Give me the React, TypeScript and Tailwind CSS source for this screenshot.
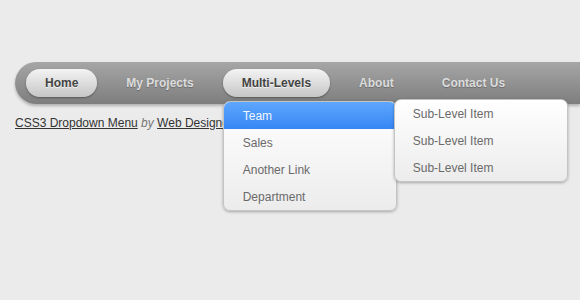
import React from "react";

const items = ["Home", "My Projects", "Multi-Levels", "About", "Contact Us"];
const subItems = ["Team", "Sales", "Another Link", "Department"];

export default function App() {
  return (
    <div className="min-h-[300px] w-full overflow-hidden bg-[#ebebeb] pt-[62px] font-['Liberation_Sans',Arial,sans-serif]">
      {/* Nav bar */}
      <nav className="ml-[15px] flex h-[42px] items-center gap-[10px] rounded-l-[21px] bg-gradient-to-b from-[#a6a6a6] to-[#7e7e7e] pl-[11px] shadow-[0_2px_3px_rgba(0,0,0,0.25)]">
        {items.map((label) => {
          const active = label === "Home" || label === "Multi-Levels";
          return (
            <div key={label} className="relative">
              <a
                className={
                  active
                    ? "flex h-[28px] items-center rounded-[14px] bg-gradient-to-b from-[#f4f4f4] to-[#c6c6c6] px-[19px] text-[12px] font-bold text-[#444] shadow-[0_1px_2px_rgba(0,0,0,0.35)] [text-shadow:0_1px_0_rgba(255,255,255,0.7)]"
                    : "flex h-[28px] items-center px-[19px] text-[12px] font-bold text-[#dcdcdc] [text-shadow:0_1px_1px_rgba(0,0,0,0.25)]"
                }
              >
                {label}
              </a>
              {label === "Multi-Levels" && (
                <div className="absolute left-0 top-[32px] z-10 w-[174px] rounded-[7px] border border-[#c4c4c4] bg-gradient-to-b from-white to-[#ececec] shadow-[0_1px_3px_rgba(0,0,0,0.3)]">
                  {subItems.map((s, i) => (
                    <div key={s} className="relative">
                      <div
                        className={
                          i === 0
                            ? "flex h-[27px] items-center rounded-t-[6px] bg-gradient-to-b from-[#5ea7ff] to-[#3586f4] px-[19px] text-[12px] text-[#f2f6ff]"
                            : "flex h-[27px] items-center px-[19px] text-[12px] text-[#6a6a6a]"
                        }
                      >
                        {s}
                      </div>
                      {i === 0 && (
                        <div className="absolute left-[170px] top-[-3px] z-20 w-[174px] rounded-[7px] border border-[#c4c4c4] bg-gradient-to-b from-white to-[#ececec] shadow-[0_1px_3px_rgba(0,0,0,0.3)]">
                          {["Sub-Level Item", "Sub-Level Item", "Sub-Level Item"].map((t, k) => (
                            <div
                              key={k}
                              className="flex h-[27px] items-center px-[18px] text-[12px] text-[#6a6a6a]"
                            >
                              {t}
                            </div>
                          ))}
                        </div>
                      )}
                    </div>
                  ))}
                </div>
              )}
            </div>
          );
        })}
      </nav>

      {/* Credit line */}
      <p className="ml-[15px] mt-[10px] text-[12px] leading-[18px] text-[#333]">
        <a className="underline">CSS3 Dropdown Menu</a>{" "}
        <em className="text-[#777]">by</em> <a className="underline">Web Designer Wall</a>
      </p>
    </div>
  );
}
